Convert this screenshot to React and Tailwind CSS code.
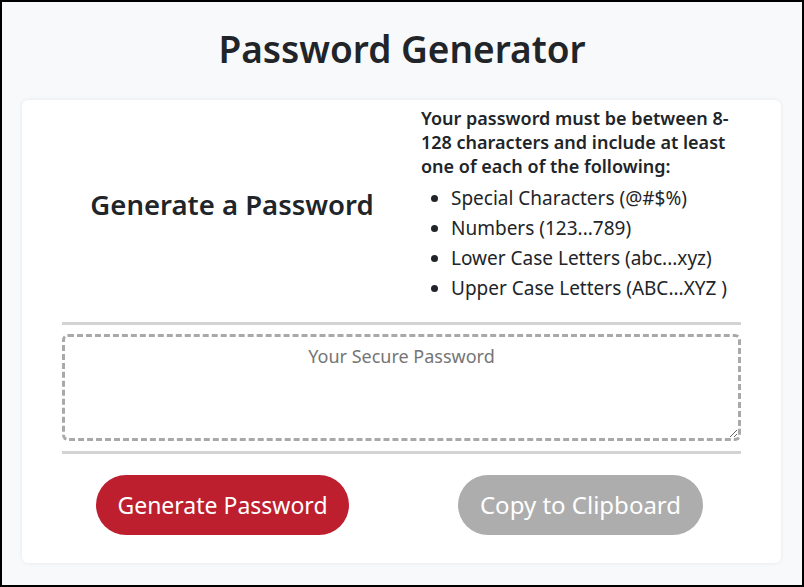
export default function App() {
  return (
    <div className="w-[804px] h-[587px] border-2 border-black bg-[#f8f9fa] box-border overflow-hidden" style={{ fontFamily: '"Noto Sans", "Open Sans", sans-serif' }}>
      <h1 className="text-center text-[37px] font-semibold text-[#212529] leading-none pt-[28px] h-[98px]">Password Generator</h1>
      <div className="ml-[20px] w-[759px] h-[463px] bg-white rounded-md shadow-[0_0_4px_rgba(0,0,0,0.08)] px-[40px] pt-[6px]">
        <div className="flex h-[216px]">
          <div className="w-[340px] flex items-center justify-center pb-[18px]">
            <h2 className="text-[27.5px] font-semibold text-[#212529]">Generate a Password</h2>
          </div>
          <div className="w-[339px] pl-[19px] text-[#212529]">
            <p className="text-[18px] font-semibold leading-[24px]">Your password must be between 8-128 characters and include at least one of each of the following:</p>
            <ul className="list-disc pl-[30px] mt-[5px] text-[19px] leading-[30px]">
              <li>Special Characters (@#$%)</li>
              <li>Numbers (123...789)</li>
              <li>Lower Case Letters (abc...xyz)</li>
              <li>Upper Case Letters (ABC...XYZ )</li>
            </ul>
          </div>
        </div>
        <div className="h-[3px] bg-[#d3d3d3]"></div>
        <textarea readOnly placeholder="Your Secure Password" className="mt-[9px] block w-full h-[107px] border-[3px] border-dashed border-[#a9a9a9] rounded-md text-center text-[18px] pt-[6px] placeholder:text-[#757575] outline-none"></textarea>
        <div className="mt-[10px] h-[3px] bg-[#d3d3d3]"></div>
        <div className="flex mt-[21px] pl-[34px] gap-[109px]">
          <button className="w-[253px] h-[60px] rounded-full bg-[#bd1f2f] text-white text-[23px]">Generate Password</button>
          <button className="w-[245px] h-[60px] rounded-full bg-[#adadad] text-white text-[24px]">Copy to Clipboard</button>
        </div>
      </div>
    </div>
  );
}
